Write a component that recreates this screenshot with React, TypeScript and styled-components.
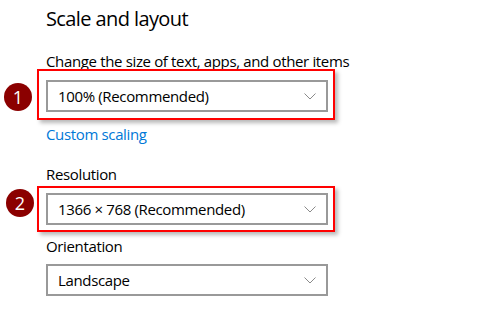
import React from "react";
import styled, { createGlobalStyle } from "styled-components";

const GlobalStyle = createGlobalStyle`
  html, body {
    margin: 0;
    padding: 0;
    background: #fff;
  }
  body {
    font-family: "Open Sans", "Noto Sans", "Liberation Sans", sans-serif;
    color: #000;
  }
`;

type FieldProps = {
  value: string;
};

function Dropdown({ value }: FieldProps) {
  return (
    <Select>
      <SelectText>{value}</SelectText>
      <Chevron width="12" height="7" viewBox="0 0 12 7">
        <path d="M0.5 0.5 L6 6 L11.5 0.5" fill="none" stroke="#8a8a8a" strokeWidth="1" />
      </Chevron>
    </Select>
  );
}

function App() {
  return (
    <Page>
      <GlobalStyle />
      <Title>Scale and layout</Title>
      <Label $top={18}>Change the size of text, apps, and other items</Label>
      <Annotated $gap={9} $frameTop={11} $frameBottom={8}>
        <Badge $left={-42} $top={3}>1</Badge>
        <Dropdown value="100% (Recommended)" />
      </Annotated>
      <Link>Custom scaling</Link>
      <Label $top={20}>Resolution</Label>
      <Annotated $gap={9} $frameTop={7} $frameBottom={7}>
        <Badge $left={-40} $top={-4}>2</Badge>
        <Dropdown value="1366 × 768 (Recommended)" />
      </Annotated>
      <Label $top={11}>Orientation</Label>
      <Plain>
        <Dropdown value="Landscape" />
      </Plain>
    </Page>
  );
}

const Page = styled.div`
  display: flex;
  flex-direction: column;
  align-items: flex-start;
  padding: 5px 0 0 46px;
  width: 484px;
  height: 330px;
  box-sizing: border-box;
  overflow: hidden;
`;

const Title = styled.div`
  font-size: 20px;
  line-height: 28px;
  font-weight: 400;
  letter-spacing: -0.6px;
  color: #000;
`;

const Label = styled.div<{ $top: number }>`
  margin-top: ${(p) => p.$top}px;
  font-size: 15px;
  line-height: 20px;
  letter-spacing: -0.35px;
  color: #000;
`;

const Link = styled.div`
  margin-top: 12px;
  font-size: 15px;
  line-height: 20px;
  letter-spacing: -0.35px;
  color: #0078d7;
`;

const Annotated = styled.div<{ $gap: number; $frameTop: number; $frameBottom: number }>`
  position: relative;
  margin-top: ${(p) => p.$gap}px;

  &::before {
    content: "";
    position: absolute;
    top: -${(p) => p.$frameTop}px;
    left: -9px;
    right: -7px;
    bottom: -${(p) => p.$frameBottom}px;
    border: 2px solid #f00;
    box-shadow: 3px 3px 4px rgba(0, 0, 0, 0.28);
    pointer-events: none;
  }
`;

const Plain = styled.div`
  margin-top: 8px;
`;

const Badge = styled.div<{ $left: number; $top: number }>`
  position: absolute;
  left: ${(p) => p.$left}px;
  top: ${(p) => p.$top}px;
  width: 28px;
  height: 28px;
  border-radius: 50%;
  background: #8b0000;
  color: #fff;
  display: flex;
  align-items: center;
  justify-content: center;
  font-size: 18px;
  line-height: 1;
`;

const Select = styled.div`
  display: flex;
  align-items: center;
  justify-content: space-between;
  width: 282px;
  height: 32px;
  padding: 0 10px 0 10px;
  border: 2px solid #999;
  box-sizing: border-box;
  background: #fff;
`;

const SelectText = styled.span`
  font-size: 15px;
  line-height: 20px;
  letter-spacing: -0.35px;
  color: #000;
`;

const Chevron = styled.svg`
  display: block;
`;

export default App;
